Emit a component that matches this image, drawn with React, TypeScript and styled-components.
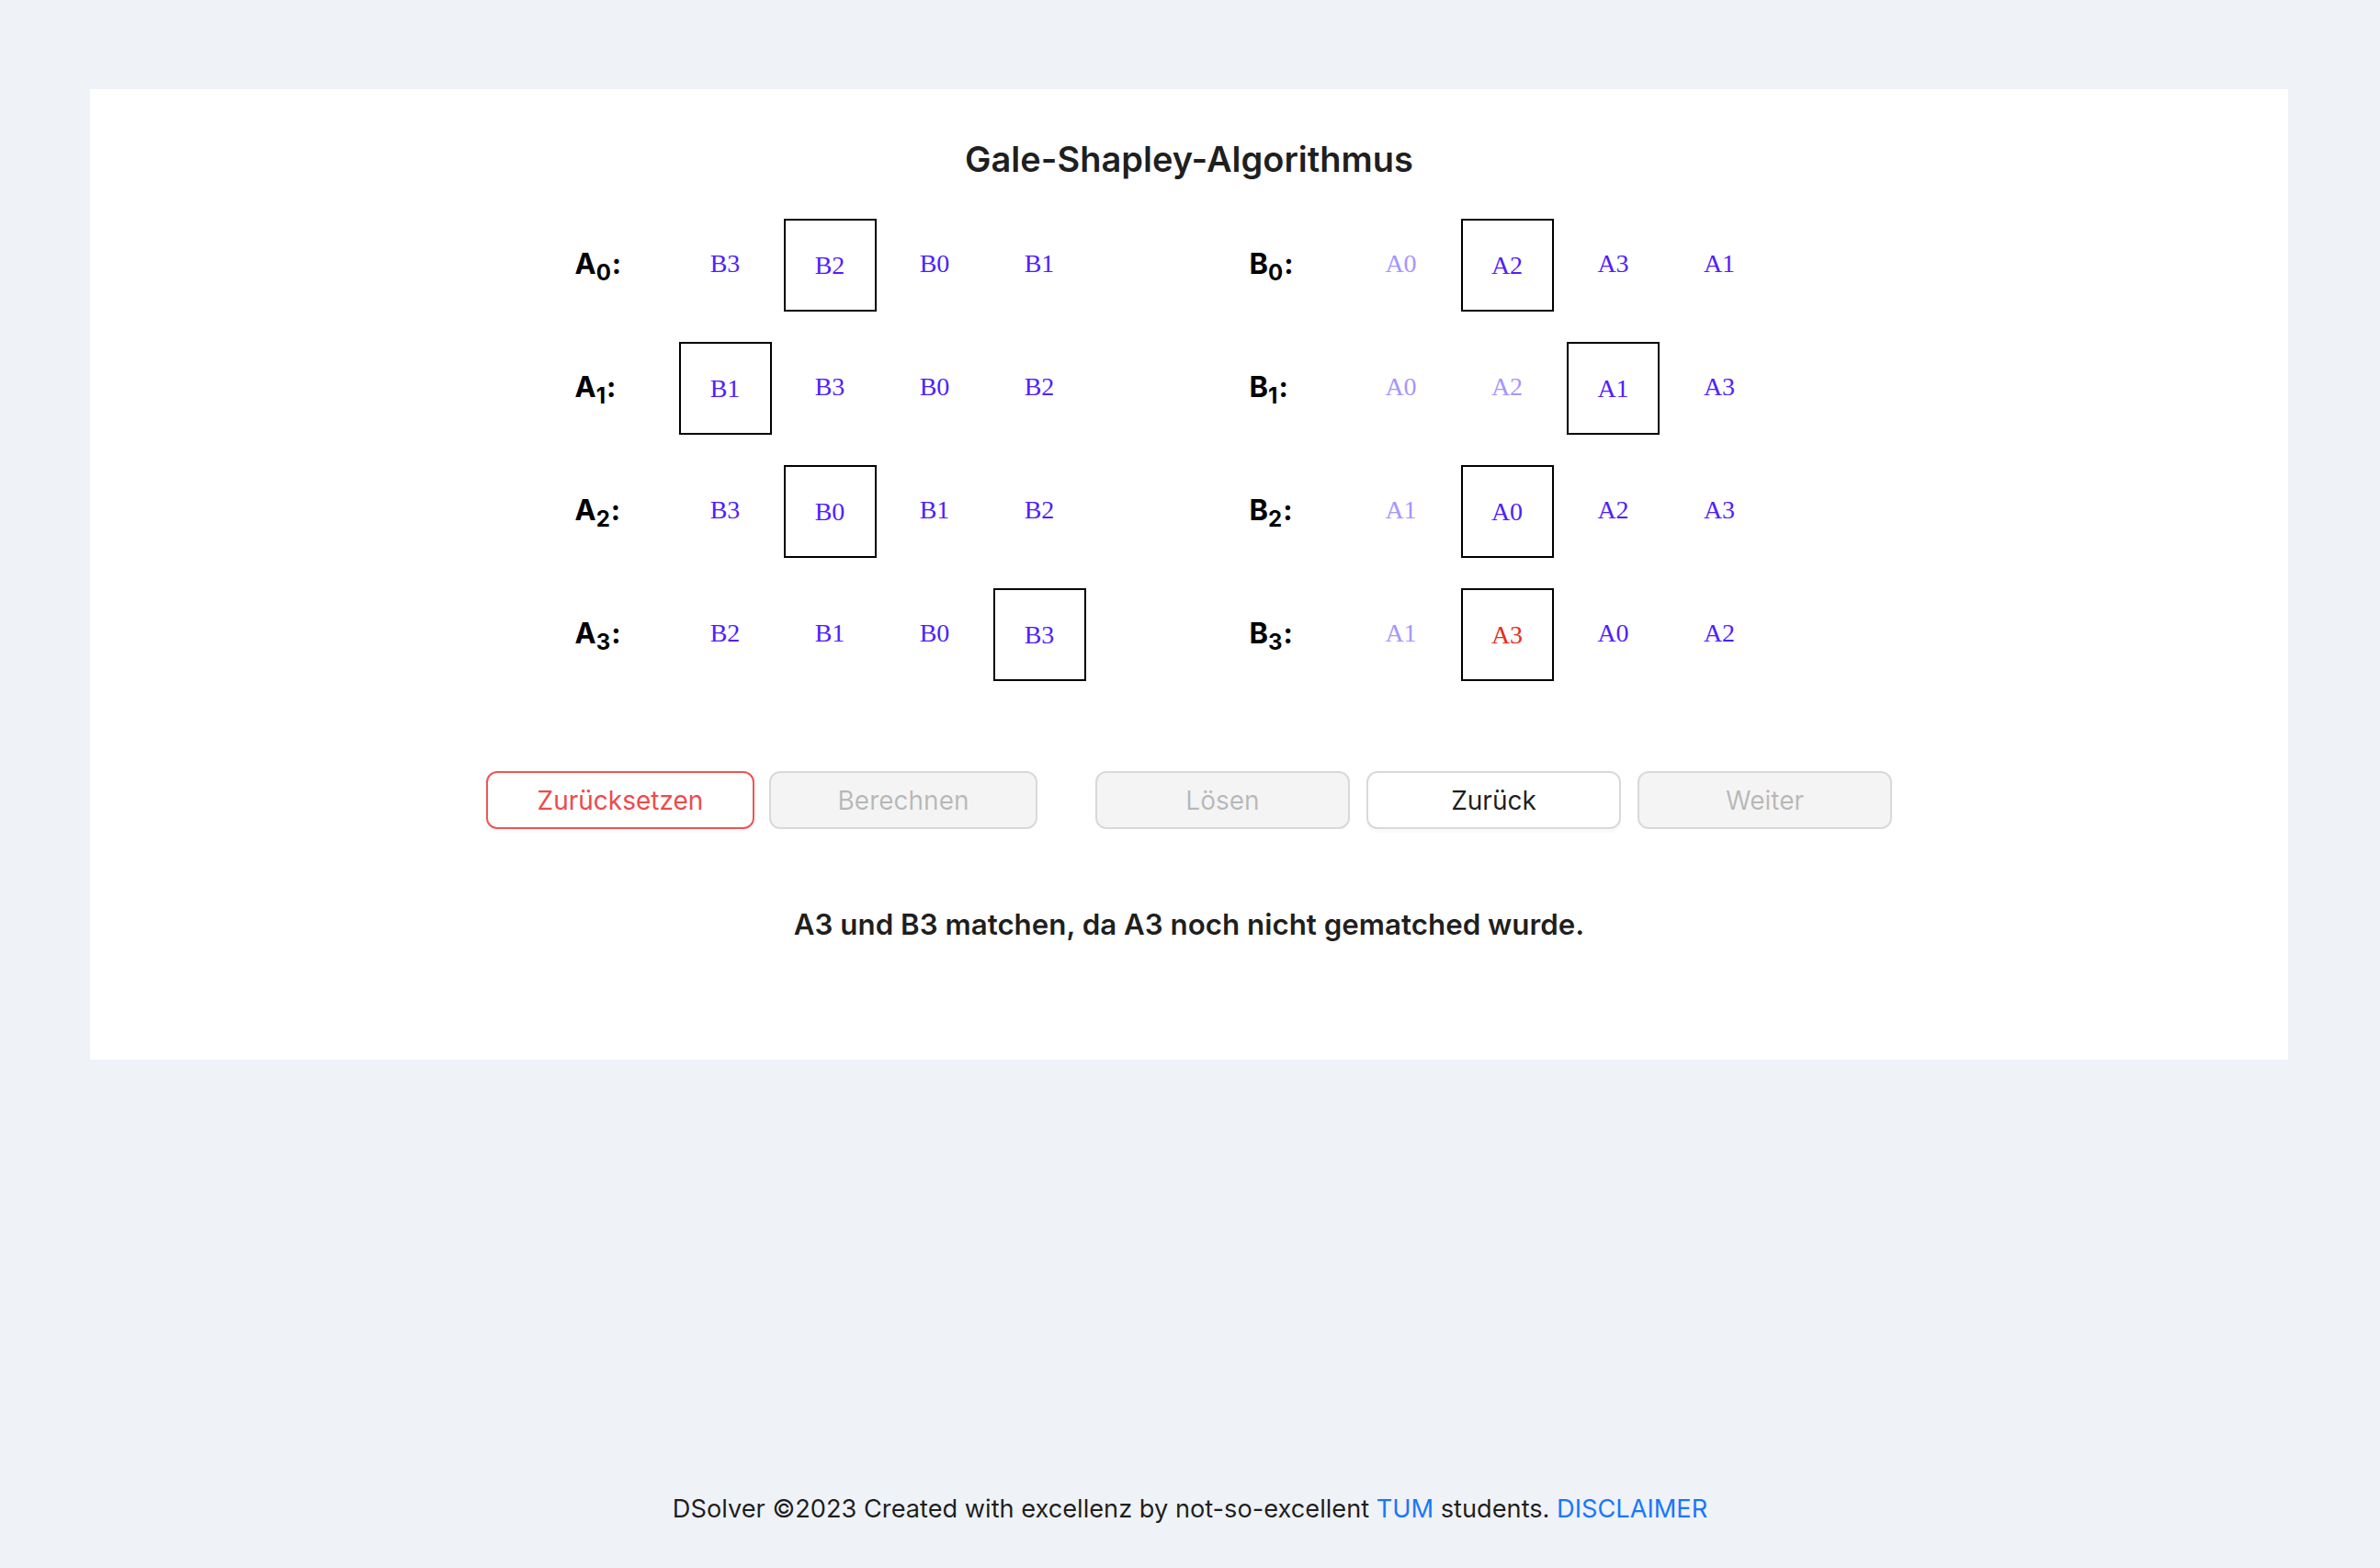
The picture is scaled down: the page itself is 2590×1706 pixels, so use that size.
import React from "react";
import styled, { createGlobalStyle } from "styled-components";

const GlobalStyle = createGlobalStyle`
  html, body {
    margin: 0;
    padding: 0;
    background: #eff2f7;
  }
  body {
    font-family: Inter, "Noto Sans", "Liberation Sans", sans-serif;
    color: rgba(0, 0, 0, 0.88);
  }
  * { box-sizing: border-box; }
`;

const Page = styled.div`
  min-height: 100vh;
  display: flex;
  flex-direction: column;
`;

const Content = styled.main`
  flex: 1;
  padding: 97px 100px 0 98px;
`;

const Card = styled.section`
  background: #ffffff;
  height: 1056px;
  padding-top: 52px;
  display: flex;
  flex-direction: column;
  align-items: center;
`;

const Title = styled.h1`
  margin: 0;
  font-size: 38px;
  line-height: 48px;
  font-weight: 600;
  color: rgba(0, 0, 0, 0.88);
`;

const Board = styled.div`
  margin-top: 41px;
  margin-right: 42px;
  display: flex;
  gap: 177px;
`;

const Side = styled.div`
  display: flex;
  flex-direction: column;
  gap: 33px;
`;

const PrefRow = styled.div<{ $gap: number }>`
  display: grid;
  grid-template-columns: repeat(5, 101px);
  column-gap: ${(p) => p.$gap}px;
  height: 101px;
  align-items: center;
`;

const Label = styled.div`
  font-size: 31px;
  font-weight: 700;
  color: #000;
  line-height: 1;
  padding-left: 1px;
  margin-top: -4px;
`;

const Sub = styled.sub`
  font-size: 24px;
  vertical-align: -7px;
  line-height: 0;
  margin-right: 1px;
`;

type Tone = "active" | "faded" | "match";

const toneColor: Record<Tone, string> = {
  active: "#4f1eff",
  faded: "#a595ff",
  match: "#ea2b20",
};

const Cell = styled.div<{ $tone: Tone; $boxed: boolean }>`
  width: 101px;
  height: 101px;
  display: flex;
  align-items: center;
  justify-content: center;
  font-family: "Liberation Serif", "Times New Roman", serif;
  font-size: 28px;
  color: ${(p) => toneColor[p.$tone]};
  border: 2px solid ${(p) => (p.$boxed ? "#000" : "transparent")};
  padding-bottom: ${(p) => (p.$boxed ? "0" : "3px")};
`;

const Actions = styled.div`
  margin-top: 98px;
  display: flex;
  align-items: center;
  gap: 63px;
`;

const ButtonGroup = styled.div<{ $gap: number }>`
  display: flex;
  gap: ${(p) => p.$gap}px;
`;

type Variant = "danger" | "default" | "disabled";

const Button = styled.button<{ $variant: Variant; $w: number }>`
  width: ${(p) => p.$w}px;
  height: 63px;
  border-radius: 12px;
  font-family: Inter, "Noto Sans", "Liberation Sans", sans-serif;
  font-size: 28px;
  border: 2px solid
    ${(p) => (p.$variant === "danger" ? "#ee5555" : "#d9d9d9")};
  background: ${(p) => (p.$variant === "disabled" ? "#f4f4f4" : "#ffffff")};
  color: ${(p) =>
    p.$variant === "danger"
      ? "#ee4a4a"
      : p.$variant === "disabled"
      ? "rgba(0,0,0,0.25)"
      : "rgba(0,0,0,0.88)"};
  box-shadow: ${(p) =>
    p.$variant === "disabled" ? "none" : "0 4px 0 rgba(0,0,0,0.02)"};
  cursor: ${(p) => (p.$variant === "disabled" ? "not-allowed" : "pointer")};
  padding: 0;
`;

const Message = styled.p`
  margin: 84px 0 0;
  font-size: 31.3px;
  line-height: 40px;
  font-weight: 600;
  color: rgba(0, 0, 0, 0.88);
`;

const Footer = styled.footer`
  padding: 48px 100px 42px;
  text-align: center;
  font-size: 27.2px;
  line-height: 44px;
  color: rgba(0, 0, 0, 0.88);
`;

const Link = styled.a`
  color: #1677ff;
  text-decoration: none;
`;

type Entry = { name: string; tone: Tone; boxed?: boolean };

const aPrefs: Entry[][] = [
  [
    { name: "B3", tone: "active" },
    { name: "B2", tone: "active", boxed: true },
    { name: "B0", tone: "active" },
    { name: "B1", tone: "active" },
  ],
  [
    { name: "B1", tone: "active", boxed: true },
    { name: "B3", tone: "active" },
    { name: "B0", tone: "active" },
    { name: "B2", tone: "active" },
  ],
  [
    { name: "B3", tone: "active" },
    { name: "B0", tone: "active", boxed: true },
    { name: "B1", tone: "active" },
    { name: "B2", tone: "active" },
  ],
  [
    { name: "B2", tone: "active" },
    { name: "B1", tone: "active" },
    { name: "B0", tone: "active" },
    { name: "B3", tone: "active", boxed: true },
  ],
];

const bPrefs: Entry[][] = [
  [
    { name: "A0", tone: "faded" },
    { name: "A2", tone: "active", boxed: true },
    { name: "A3", tone: "active" },
    { name: "A1", tone: "active" },
  ],
  [
    { name: "A0", tone: "faded" },
    { name: "A2", tone: "faded" },
    { name: "A1", tone: "active", boxed: true },
    { name: "A3", tone: "active" },
  ],
  [
    { name: "A1", tone: "faded" },
    { name: "A0", tone: "active", boxed: true },
    { name: "A2", tone: "active" },
    { name: "A3", tone: "active" },
  ],
  [
    { name: "A1", tone: "faded" },
    { name: "A3", tone: "match", boxed: true },
    { name: "A0", tone: "active" },
    { name: "A2", tone: "active" },
  ],
];

function PrefSide({
  letter,
  prefs,
  gap,
}: {
  letter: string;
  prefs: Entry[][];
  gap: number;
}) {
  return (
    <Side>
      {prefs.map((row, i) => (
        <PrefRow key={i} $gap={gap}>
          <Label>
            {letter}
            <Sub>{i}</Sub>:
          </Label>
          {row.map((e, j) => (
            <Cell key={j} $tone={e.tone} $boxed={!!e.boxed}>
              {e.name}
            </Cell>
          ))}
        </PrefRow>
      ))}
    </Side>
  );
}

export default function App() {
  return (
    <>
      <GlobalStyle />
      <Page>
        <Content>
          <Card>
            <Title>Gale-Shapley-Algorithmus</Title>
            <Board>
              <PrefSide letter="A" prefs={aPrefs} gap={13} />
              <PrefSide letter="B" prefs={bPrefs} gap={14.5} />
            </Board>
            <Actions>
              <ButtonGroup $gap={16}>
                <Button $variant="danger" $w={292}>Zurücksetzen</Button>
                <Button $variant="disabled" $w={292} disabled>
                  Berechnen
                </Button>
              </ButtonGroup>
              <ButtonGroup $gap={18}>
                <Button $variant="disabled" $w={277} disabled>
                  Lösen
                </Button>
                <Button $variant="default" $w={277}>Zurück</Button>
                <Button $variant="disabled" $w={277} disabled>
                  Weiter
                </Button>
              </ButtonGroup>
            </Actions>
            <Message>A3 und B3 matchen, da A3 noch nicht gematched wurde.</Message>
          </Card>
        </Content>
        <Footer>
          DSolver ©2023 Created with excellenz by not-so-excellent{" "}
          <Link href="#">TUM</Link> students. <Link href="#">DISCLAIMER</Link>
        </Footer>
      </Page>
    </>
  );
}
